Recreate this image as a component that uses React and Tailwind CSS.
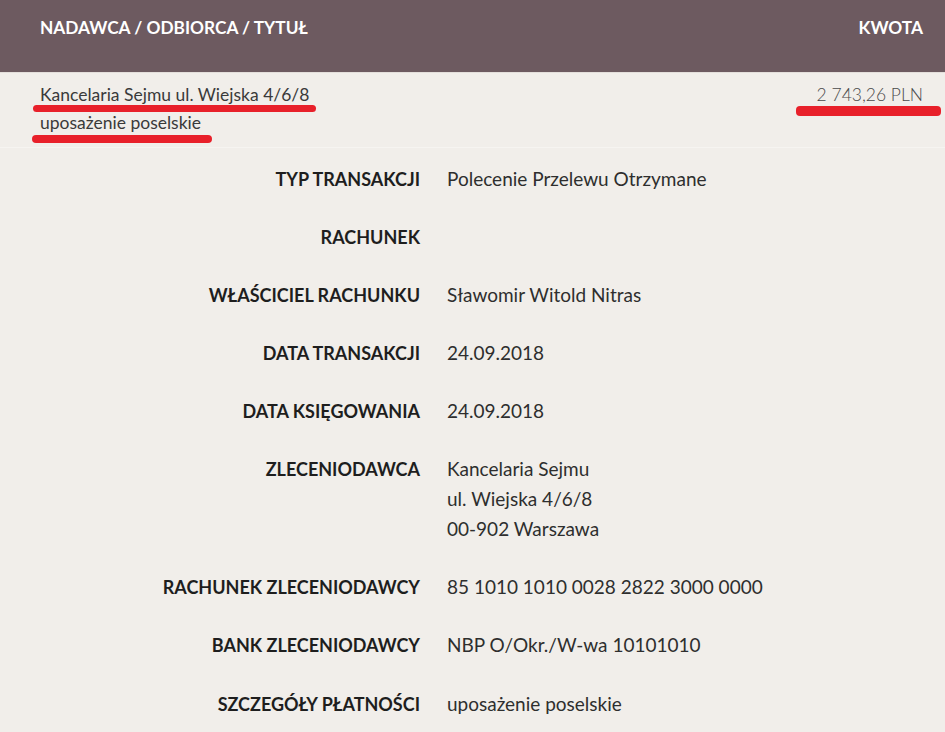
import React from "react";

const rows = [
  ["TYP TRANSAKCJI", ["Polecenie Przelewu Otrzymane"]],
  ["RACHUNEK", [""]],
  ["WŁAŚCICIEL RACHUNKU", ["Sławomir Witold Nitras"]],
  ["DATA TRANSAKCJI", ["24.09.2018"]],
  ["DATA KSIĘGOWANIA", ["24.09.2018"]],
  ["ZLECENIODAWCA", ["Kancelaria Sejmu", "ul. Wiejska 4/6/8", "00-902 Warszawa"]],
  ["RACHUNEK ZLECENIODAWCY", ["85 1010 1010 0028 2822 3000 0000"]],
  ["BANK ZLECENIODAWCY", ["NBP O/Okr./W-wa 10101010"]],
  ["SZCZEGÓŁY PŁATNOŚCI", ["uposażenie poselskie"]],
];

export default function App() {
  return (
    <div
      className="w-[945px] h-[732px] overflow-hidden bg-[#f1eeea]"
      style={{ fontFamily: "Lato, 'Liberation Sans', sans-serif" }}
    >
      <div className="h-[72px] bg-[#6d5a60] flex items-start justify-between pl-10 pr-[22px] pt-[15px] leading-[26px] text-white font-bold text-[17.3px]">
        <span>NADAWCA / ODBIORCA / TYTUŁ</span>
        <span>KWOTA</span>
      </div>
      <div className="h-px bg-[#e4dfdb]" />
      <div className="relative h-[75px] flex justify-between pl-10 pr-[22px] pt-[8px] border-b border-[#f6f4f1] text-[17.5px] leading-[28px] text-[#3a3a3a]">
        <div className="flex flex-col">
          <span>Kancelaria Sejmu ul. Wiejska 4/6/8</span>
          <span>uposażenie poselskie</span>
        </div>
        <span className="font-light text-[17.5px] text-[#4a4a4a]">2 743,26 PLN</span>
        <div className="absolute left-[33px] top-[32px] w-[283px] h-[7px] rounded-full bg-[#e8202a]" />
        <div className="absolute left-[32px] top-[62px] w-[180px] h-[8px] rounded-full bg-[#e8202a]" />
        <div className="absolute left-[796px] top-[33px] w-[145px] h-[10px] rounded-[4px] bg-[#e8202a]" />
      </div>
      <div className="pt-[2px]">
        {rows.map(([label, vals]) => (
          <div key={label} className="flex py-[14px] leading-[30px] last:pt-[15px]">
            <div className="w-[420px] shrink-0 text-right font-bold text-[18px] text-[#1e1e1e]">
              {label}
            </div>
            <div className="pl-[27px] flex flex-col text-[19px] text-[#2e2e2e] min-h-[30px]">
              {vals.map((v, i) => (
                <span key={i}>{v}</span>
              ))}
            </div>
          </div>
        ))}
      </div>
    </div>
  );
}
